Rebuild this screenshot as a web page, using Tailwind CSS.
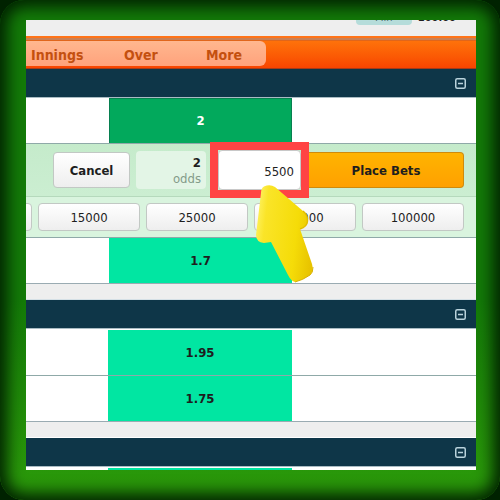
<!DOCTYPE html>
<html lang="en">
<head>
    <meta charset="UTF-8">
    <meta name="viewport" content="width=device-width, initial-scale=1.0">
    <title>Place Bets</title>
    <script src="https://cdn.jsdelivr.net/npm/@tailwindcss/browser@4"></script>
</head>
<body class="h-screen overflow-hidden bg-[#002200] font-['DejaVu_Sans_Condensed','DejaVu_Sans',sans-serif] text-[13px] leading-4 text-[#1e1e1e]">
    <div class="h-full rounded-3xl bg-linear-to-b from-[#137a08] from-60% to-[#2c9c0a] pt-5 pb-[30px] pl-[26px] pr-6 shadow-[inset_0_0_16px_7px_#002200]">
        <main class="h-full overflow-hidden bg-[#eeeeee]">

            <!-- Account bar -->
            <header class="flex h-4 items-end justify-end gap-1.5 overflow-hidden pr-5 pb-[11px] text-[11px] leading-[26px]">
                <span class="h-5 w-14 shrink-0 rounded-sm bg-[#b5dcda] text-center text-[#4b6b70]">Min</span>
                <span class="h-5 font-bold">100.00</span>
            </header>

            <!-- Market tabs -->
            <nav class="border-t-2 border-b border-t-[#ff7418] border-b-[#a83a16] bg-linear-to-b from-[#ff760c] to-[#f84400] pb-0.5">
                <div class="h-[3px] border-b border-[#e0661c] bg-[#c98055]"></div>
                <div class="flex h-[25px] w-60 items-center rounded-r-md bg-linear-to-b from-[#ffb78f] to-[#ffa27c] pt-0.5 text-[14px] font-bold text-[#c4500f]">
                    <a href="#" class="w-[93px] pl-[5px]">Innings</a>
                    <a href="#" class="w-[82px] pl-[5px]">Over</a>
                    <a href="#" class="pl-[5px]">More</a>
                </div>
            </nav>

            <!-- Market 1 -->
            <section>
                <div class="flex h-7 items-center justify-end bg-[#0e3648] pr-2.5">
                    <button aria-label="Collapse" class="text-[#b9d3dc]">
                        <svg class="size-[11px]" viewBox="0 0 11 11" fill="none" stroke="currentColor"><rect x="0.75" y="0.75" width="9.5" height="9.5" rx="1.5" stroke-width="1.5"/><path d="M3 5.5h5" stroke-width="1.5"/></svg>
                    </button>
                </div>
                <div class="grid h-[47px] grid-cols-[83px_183px_1fr] border-t border-b border-t-[#a9bcc3] border-b-[#8fa9a8] bg-white">
                    <button class="col-start-2 border-x border-t border-[#078050] bg-[#02a95c] font-bold text-white">2</button>
                </div>

                <!-- Bet slip -->
                <form class="bg-linear-to-b from-[#c5ebcb] to-[#d0f0d6]" onsubmit="return false">
                    <div class="flex h-[53px] items-center justify-end border-b border-[#b5d9bc] pr-3">
                        <button type="button" class="h-9 w-[77px] rounded border border-[#c2c8c4] bg-linear-to-b from-white to-[#eeeeee] pt-0.5 font-bold">Cancel</button>
                        <div class="ml-1.5 h-[38px] w-[70px] rounded bg-[#e3f5e6] pt-1 pr-[5px] text-right">
                            <p class="font-bold">2</p>
                            <label for="stake" class="block font-medium text-[#839c8a]">odds</label>
                        </div>
                        <div class="-my-2 ml-1 border-8 border-[#ff4444]">
                            <input id="stake" type="text" value="5500" class="block h-10 w-[83px] rounded-sm border border-[#c8c8c8] bg-white pt-0.5 pr-1.5 text-right">
                        </div>
                        <button type="submit" class="h-9 w-[155px] rounded-r border border-l-0 border-[#cf8a0c] bg-linear-to-b from-[#ffb400] to-[#ffa000] pt-0.5 font-bold">Place Bets</button>
                    </div>
                    <div class="flex h-10 items-center justify-end gap-1.5 overflow-hidden bg-[#d9f4de] pr-3 *:h-7 *:w-[102px] *:shrink-0 *:rounded *:border *:border-[#c2c8c4] *:bg-linear-to-b *:from-white *:to-[#eeeeee] *:pt-0.5">
                        <button type="button" aria-label="10000"></button>
                        <button type="button">15000</button>
                        <button type="button">25000</button>
                        <button type="button">50000</button>
                        <button type="button">100000</button>
                    </div>
                </form>

                <div class="grid h-[47px] grid-cols-[83px_183px_1fr] border-t border-b border-t-[#8fa9a8] border-b-[#9aabb2] bg-white">
                    <button class="col-start-2 bg-[#01e6a2] font-bold">1.7</button>
                </div>
            </section>

            <!-- Market 2 -->
            <section class="mt-[15px] border-t border-[#d5e0e6]">
                <div class="flex h-7 items-center justify-end bg-[#0e3648] pr-2.5">
                    <button aria-label="Collapse" class="text-[#b9d3dc]">
                        <svg class="size-[11px]" viewBox="0 0 11 11" fill="none" stroke="currentColor"><rect x="0.75" y="0.75" width="9.5" height="9.5" rx="1.5" stroke-width="1.5"/><path d="M3 5.5h5" stroke-width="1.5"/></svg>
                    </button>
                </div>
                <div class="grid h-12 grid-cols-[82px_184px_1fr] border-t border-b border-t-[#a9bcc3] border-b-[#8fa9a8] bg-white pt-px">
                    <button class="col-start-2 bg-[#01e6a2] font-bold">1.95</button>
                </div>
                <div class="grid h-[46px] grid-cols-[82px_184px_1fr] border-b border-[#9aabb2] bg-white">
                    <button class="col-start-2 bg-[#01e6a2] font-bold">1.75</button>
                </div>
            </section>

            <!-- Market 3 -->
            <section class="mt-[15px] border-t border-white">
                <div class="flex h-7 items-center justify-end bg-[#0e3648] pr-2.5">
                    <button aria-label="Collapse" class="text-[#b9d3dc]">
                        <svg class="size-[11px]" viewBox="0 0 11 11" fill="none" stroke="currentColor"><rect x="0.75" y="0.75" width="9.5" height="9.5" rx="1.5" stroke-width="1.5"/><path d="M3 5.5h5" stroke-width="1.5"/></svg>
                    </button>
                </div>
                <div class="grid h-12 grid-cols-[82px_184px_1fr] border-t border-[#a9bcc3] bg-white pt-px">
                    <button class="col-start-2 bg-[#01e6a2]" aria-label="Odds"></button>
                </div>
            </section>
        </main>
    </div>

    <!-- Pointer to the stake box -->
    <svg class="pointer-events-none absolute top-[183px] left-[254px] h-[102px] w-[62px]" viewBox="0 0 62 102" aria-hidden="true">
        <defs>
            <linearGradient id="arrow" x1="0" y1="0.4" x2="1" y2="0.6">
                <stop offset="0" stop-color="#fdf05a"/>
                <stop offset="0.15" stop-color="#fae428"/>
                <stop offset="0.7" stop-color="#f5dc08"/>
                <stop offset="1" stop-color="#e8c400"/>
            </linearGradient>
        </defs>
        <path d="M7 10Q7 5 10 3.500Q16 1 21 4L49 28Q54 32 54 38Q53 44 46 46L58 81Q60 88 56 92Q49 97 41 99Q37 98 34 92L17 59L10 60Q2 59 2 52Z" fill="url(#arrow)"/>
        <path d="M59 84Q59 90 56 92Q49 97 41 99" fill="none" stroke="#d9b000" stroke-width="1"/>
        <path d="M49 28Q54 32 53.500 38Q53 44 46 46" fill="none" stroke="#e0bc00" stroke-width="1.500"/>
    </svg>
</body>
</html>
